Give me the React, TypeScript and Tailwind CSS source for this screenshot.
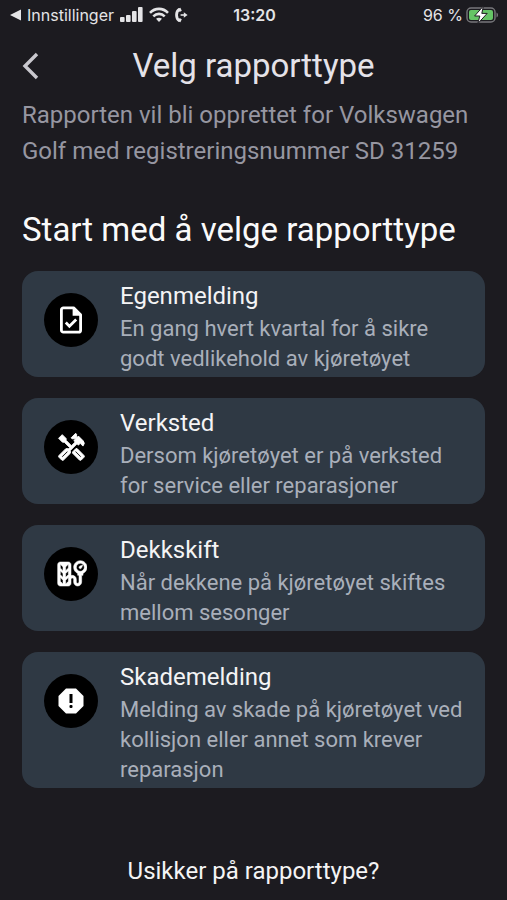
import type { ReactNode } from 'react';
import { MdOutlineHandyman, MdTireRepair } from 'react-icons/md';

type ReportType = {
  title: string;
  description: string;
  icon: ReactNode;
};

const FileCheckIcon = () => (
  <svg width="22" height="28" viewBox="0 0 22 28" fill="none" stroke="currentColor" strokeWidth="2.8" strokeLinejoin="round" aria-hidden="true">
    <path d="M3.4 1.8h10.2l7 7v15.4a2 2 0 0 1-2 2H3.4a2 2 0 0 1-2-2V3.8a2 2 0 0 1 2-2z" />
    <path d="M12.6 1.8v8h8z" fill="currentColor" stroke="none" />
    <path d="M5.8 16.6l3.6 3.6 6.8-6.6" strokeLinejoin="miter" />
  </svg>
);

const OctagonAlertIcon = () => (
  <svg width="26" height="26" viewBox="0 0 26 26" aria-hidden="true">
    <path d="M8 .5h10L25.5 8v10L18 25.5H8L.5 18V8z" fill="currentColor" />
    <rect x="11.5" y="6" width="3" height="9" fill="#000" />
    <rect x="11.5" y="17" width="3" height="3" rx="1" fill="#000" />
  </svg>
);

const reportTypes: ReportType[] = [
  {
    title: 'Egenmelding',
    description: 'En gang hvert kvartal for å sikre godt vedlikehold av kjøretøyet',
    icon: <FileCheckIcon />
  },
  {
    title: 'Verksted',
    description: 'Dersom kjøretøyet er på verksted for service eller reparasjoner',
    icon: <MdOutlineHandyman size={31} className="stroke-current stroke-[0.7px] [&>[fill=none]]:stroke-none" />
  },
  {
    title: 'Dekkskift',
    description: 'Når dekkene på kjøretøyet skiftes mellom sesonger',
    icon: <MdTireRepair size={32} className="stroke-current stroke-[0.4px] [&>[fill=none]]:stroke-none" />
  },
  {
    title: 'Skademelding',
    description: 'Melding av skade på kjøretøyet ved kollisjon eller annet som krever reparasjon',
    icon: <OctagonAlertIcon />
  }
];

const SignalIcon = () => (
  <svg width="23" height="16" viewBox="0 0 23 16" fill="currentColor" aria-hidden="true">
    <rect x="0" y="10" width="4.6" height="5" rx="1" />
    <rect x="6" y="8" width="4.6" height="7" rx="1" />
    <rect x="12" y="4" width="4.6" height="11" rx="1" />
    <rect x="18" y="0" width="4.6" height="15" rx="1" />
  </svg>
);

const WifiIcon = () => (
  <svg width="20" height="16" viewBox="0 0 20 16" fill="none" stroke="currentColor" strokeWidth="2.6" aria-hidden="true">
    <path d="M1 5.8C6 .6 14 .6 19 5.8" />
    <path d="M4.3 9.3c3.2-3.2 8.2-3.2 11.4 0" />
    <path d="M10 15l-3-3.2c1.7-1.5 4.3-1.5 6 0z" fill="currentColor" stroke="none" />
  </svg>
);

const CallForwardIcon = () => (
  <svg width="13" height="16" viewBox="0 0 13 16" fill="none" stroke="currentColor" aria-hidden="true">
    <path d="M4.4 2.2C.6 4.6.6 11.4 4.4 13.8" strokeWidth="2.8" />
    <path d="M3.4 1.6l2-.8 1.4 3-2.2 1.2zM3.4 14.4l2 .8 1.4-3-2.2-1.2z" fill="currentColor" stroke="none" />
    <path d="M5.6 8h4" strokeWidth="1.6" />
    <path d="M8.8 5.2L12.6 8l-3.8 2.8z" fill="currentColor" stroke="none" />
  </svg>
);

const BatteryIcon = () => (
  <svg width="33" height="18" viewBox="0 0 33 18" aria-hidden="true">
    <rect x="1" y="2" width="28" height="14" rx="4" fill="none" stroke="#77777b" strokeWidth="1.4" />
    <rect x="3" y="4" width="24" height="10" rx="2" fill="#65c466" />
    <path d="M30.5 6.5c2 .7 2 4.3 0 5z" fill="#77777b" />
    <path d="M17.4 0L8.6 10h5.2l-2 7.6L21.2 7.4h-5.4z" fill="#fff" stroke="#1c1b20" strokeWidth="1" />
  </svg>
);

const StatusBar = () => (
  <div className="grid grid-cols-[1fr_auto_1fr] items-center h-[30px] pl-[10px] pr-2 font-[Inter,sans-serif] text-base text-[#e4e4e6]">
    <div className="flex items-center">
      <svg width="11" height="12" viewBox="0 0 11 12" fill="currentColor" aria-hidden="true">
        <path d="M11 .5v11L0 6z" />
      </svg>
      <span className="mx-[6px]">Innstillinger</span>
      <SignalIcon />
      <span className="mx-[6px]">
        <WifiIcon />
      </span>
      <CallForwardIcon />
    </div>
    <span className="font-semibold">13:20</span>
    <div className="flex items-center justify-end gap-[3px]">
      <span>96 %</span>
      <BatteryIcon />
    </div>
  </div>
);

const ReportCard = ({ title, description, icon }: ReportType) => (
  <button type="button" className="flex items-start w-full rounded-2xl bg-[#2f3944] pl-[22px] pr-4 pt-[10px] pb-[3px] text-left">
    <span className="flex items-center justify-center shrink-0 size-[54px] mt-3 mr-[22px] rounded-full bg-black text-white">
      {icon}
    </span>
    <span>
      <span className="block mb-[2px] text-2xl leading-[31px] text-[#f4f4f5]">{title}</span>
      <span className="block text-[22px] leading-[30px] text-[#a9afba]">{description}</span>
    </span>
  </button>
);

export default function App() {
  return (
    <div className="flex flex-col min-h-screen bg-[#1c1b20] font-[Roboto,sans-serif]">
      <StatusBar />
      <header className="grid grid-cols-[44px_1fr_44px] items-center h-[67px] pt-1 px-[22px]">
        <button type="button" aria-label="Tilbake" className="text-[#c9c8ce]">
          <svg width="18" height="28" viewBox="0 0 18 28" fill="none" stroke="currentColor" strokeWidth="3.4">
            <path d="M15 2L3 14l12 12" />
          </svg>
        </button>
        <h1 className="text-center text-[33px] leading-[42px] text-[#e4e2e8]">Velg rapporttype</h1>
      </header>
      <main className="flex flex-col grow px-[22px]">
        <p className="text-2xl leading-[36px] text-[#9696a1]">
          Rapporten vil bli opprettet for Volkswagen Golf med registreringsnummer SD 31259
        </p>
        <h2 className="mt-10 text-[33px] leading-[42px] text-[#fafafa]">Start med å velge rapporttype</h2>
        <div className="flex flex-col gap-[21px] mt-5">
          {reportTypes.map((type) => (
            <ReportCard key={type.title} {...type} />
          ))}
        </div>
        <a href="#hjelp" className="mt-auto mb-3 self-center text-2xl leading-[33px] text-[#f4f4f5]">
          Usikker på rapporttype?
        </a>
      </main>
    </div>
  );
}
